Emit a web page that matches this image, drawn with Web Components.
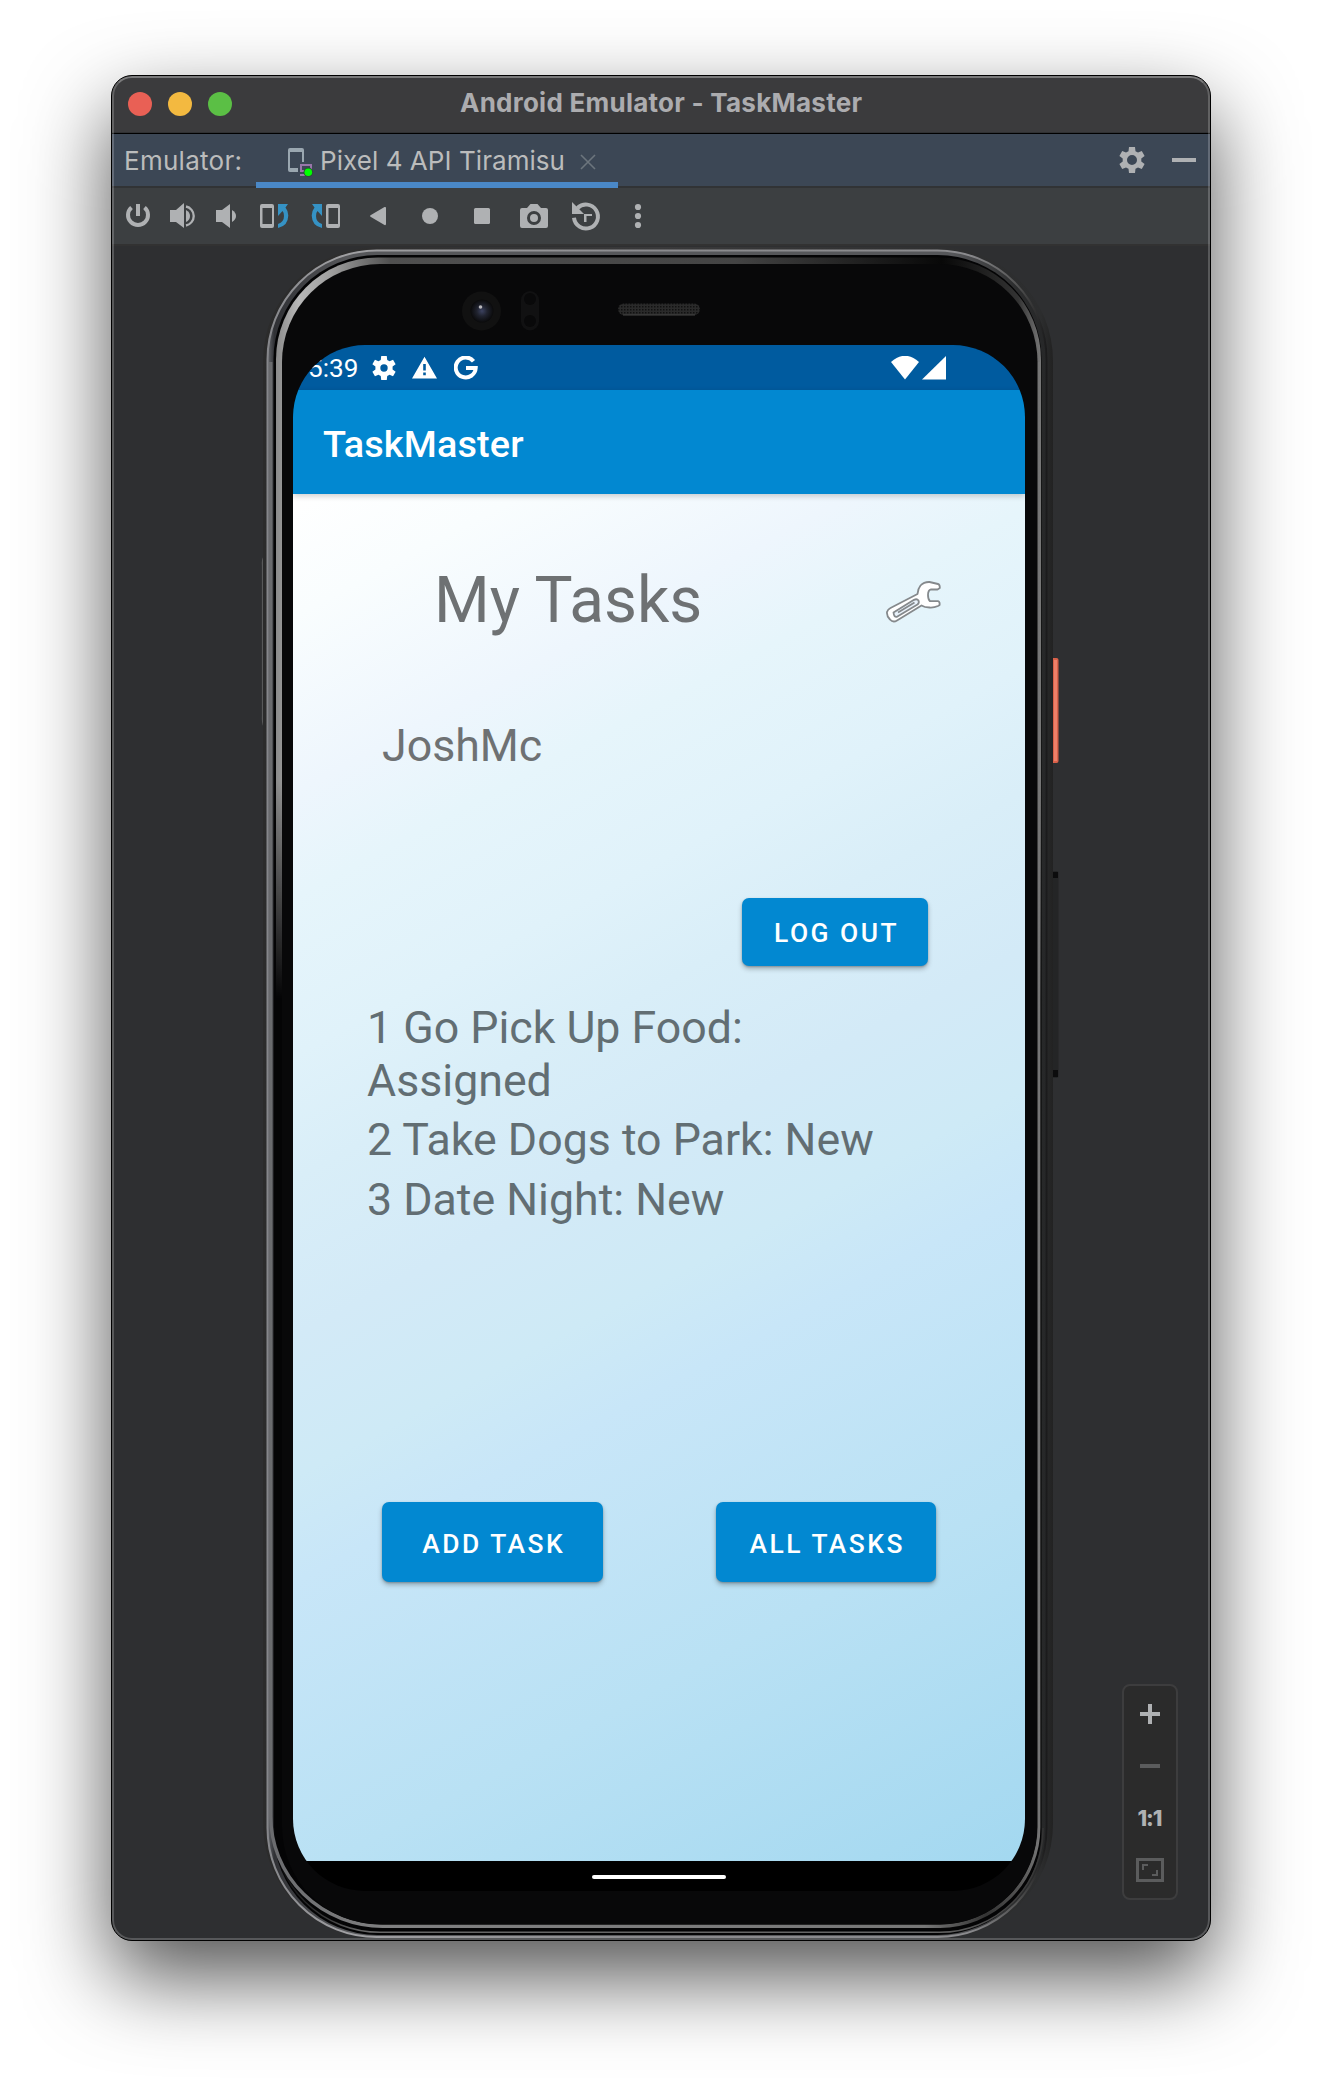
<!DOCTYPE html>
<html lang="en">
<head>
<meta charset="utf-8">
<title>Android Emulator - TaskMaster</title>
<style>
  html, body { margin: 0; background: #fff; }
  body { width: 1322px; height: 2088px; overflow: hidden; padding: 75px 111px 0; box-sizing: border-box; }
</style>
</head>
<body>
<emulator-window heading="Android Emulator - TaskMaster">
  <tab-strip slot="tabs"></tab-strip>
  <device-toolbar slot="toolbar"></device-toolbar>
  <phone-device slot="stage">
    <status-bar></status-bar>
    <app-bar>TaskMaster</app-bar>
    <task-home></task-home>
  </phone-device>
  <zoom-panel slot="controls"></zoom-panel>
</emulator-window>

<script>
function define(name, html, setup) {
  const t = document.createElement('template');
  t.innerHTML = html;
  customElements.define(name, class extends HTMLElement {
    constructor() {
      super();
      this.attachShadow({ mode: 'open' }).appendChild(t.content.cloneNode(true));
    }
    connectedCallback() { if (setup) setup(this, this.shadowRoot); }
  });
}

// Single-line label whose tracking is adjusted so that it occupies a given width.
define('fit-label', `
<style>
  :host { display: inline-block; white-space: nowrap; }
  span { display: inline-block; }
</style><span><slot></slot></span>`, (el, root) => {
  const span = root.querySelector('span');
  const n = el.textContent.length;
  const want = parseFloat(el.getAttribute('w'));
  const natural = span.getBoundingClientRect().width;
  const ls = (want - natural) / (n - 1);
  span.style.letterSpacing = ls.toFixed(3) + 'px';
  span.style.marginRight = (-ls).toFixed(3) + 'px';
});

define('tab-strip', `
<style>
  :host { display: flex; height: 54px; box-sizing: border-box; background: #3c4755; border-bottom: 2px solid #313335;
    font: 400 26px/54px Inter, sans-serif; color: #bbbcbc; padding: 0 14px 0 12px; }
  .label { width: 132px; }
  .tab { width: 362px; height: 54px; box-sizing: border-box; border-bottom: 6px solid #4a88c7; display: flex; padding-left: 32px; }
  .tab svg { margin-top: 14px; }
  .tab fit-label { margin-left: 6px; }
  .tab .x { margin: 20px 0 0 15px; }
  .right { margin-left: auto; display: flex; gap: 27px; align-items: center; height: 52px; }
  svg { display: block; flex: none; }
</style>
<div class="label"><fit-label w="118">Emulator:</fit-label></div>
<div class="tab">
  <svg width="26" height="30" viewBox="0 0 26 30"><path fill="#9aa7b0" d="M2 0H14Q16 0 16 2V14H14V4H2V20H10V24H2Q0 24 0 22V2Q0 0 2 0Z"/><path fill="#9876aa" d="M12 16H24V22H22V18H14V22H18V24H12ZM12 26H20V28H12Z"/><circle cx="20.300" cy="24.300" r="4.800" fill="#2e4a3a"/><circle cx="20.300" cy="24.300" r="3.800" fill="#0f0"/></svg>
  <fit-label w="245">Pixel 4 API Tiramisu</fit-label>
  <svg class="x" width="16" height="16" viewBox="0 0 16 16"><path d="M1 1L15 15M15 1L1 15" stroke="#6c757d" stroke-width="1.600"/></svg>
</div>
<div class="right">
  <svg width="26" height="26" viewBox="0 0 26 26"><path fill="#afb1b3" fill-rule="evenodd" d="M10 0H16L16.500 4.200L19 5.600L22.800 4L25.600 9L22.300 11.500V14.500L25.600 17L22.800 22L19 20.400L16.500 21.800L16 26H10L9.500 21.800L7 20.400L3.200 22L.4 17L3.700 14.500V11.500L.4 9L3.200 4L7 5.600L9.500 4.200ZM13 8A5 5 0 1 0 13 18A5 5 0 1 0 13 8Z"/></svg>
  <svg width="24" height="4"><path fill="#afb1b3" d="M0 0H24V4H0Z"/></svg>
</div>`);

define('device-toolbar', `
<style>
  :host { display: flex; height: 58px; box-sizing: border-box; background: #3c3f41; border-bottom: 2px solid #323232; padding: 0; }
  svg { display: block; }
</style>
<svg width="560" height="56" viewBox="112 188 560 56" fill="#afb1b3">
  <path d="M131.500 207.500A10 10 0 1 0 144.500 207.500" fill="none" stroke="#afb1b3" stroke-width="4"/><path d="M136 204H140V216H136Z"/>
  <path d="M170 210H176L184 203V228L176 222H170Z"/><path d="M186 210Q190 212 190 216Q190 220 186 222Z"/><path d="M186 206.500A9.700 9.700 0 0 1 186 225.500" fill="none" stroke="#afb1b3" stroke-width="2.300"/>
  <path d="M216 210H222L230 204V228L222 222H216Z"/><path d="M232 210Q236 212.500 236 216Q236 219.500 232 222Z"/>
  <path fill-rule="evenodd" d="M262 204H272Q274 204 274 206V226Q274 228 272 228H262Q260 228 260 226V206Q260 204 262 204ZM262.500 208V224H272V208Z"/>
  <path d="M278 204H288L285.500 207.500Q288.300 211 288.300 215.500Q288 226 278 228V224Q284 222 284 216Q284 212.500 282.500 211L278 216Z" fill="#3592c4"/>
  <path fill-rule="evenodd" d="M328 204H338Q340 204 340 206V226Q340 228 338 228H328Q326 228 326 226V206Q326 204 328 204ZM328.500 208V224H338V208Z"/>
  <path d="M322 204H312L314.500 207.500Q311.700 211 311.700 215.500Q312 226 322 228V224Q316 222 316 216Q316 212.500 317.500 211L322 216Z" fill="#3592c4"/>
  <path d="M370.500 215.200L384.500 207Q386 206.500 386 208V224Q386 225.500 384.500 225L370.500 216.800Q369.500 216 370.500 215.200Z"/>
  <circle cx="430" cy="216" r="8"/>
  <rect x="474" y="208" width="16" height="16" rx="1.500"/>
  <path fill-rule="evenodd" d="M522 208H527L530.500 204H537.500L541 208H546Q548 208 548 210V226Q548 228 546 228H522Q520 228 520 226V210Q520 208 522 208ZM534 211A7 7 0 1 0 534 225A7 7 0 1 0 534 211Z"/><circle cx="534" cy="218" r="4"/>
  <path d="M574 217.800A12 12 0 1 0 577.500 208" fill="none" stroke="#afb1b3" stroke-width="4"/><path d="M572 202L584 214H572Z"/><path d="M584 214H592V216H586.500V222H584Z"/>
  <circle cx="638" cy="207" r="3.100"/><circle cx="638" cy="216" r="3.100"/><circle cx="638" cy="225" r="3.100"/>
</svg>`);

define('phone-device', `
<style>
  :host { display: grid; width: 806px; height: 1693px; grid-template: 1693px / 806px; }
  svg, .screen { grid-area: 1 / 1; }
  svg { display: block; }
  .screen { margin: 99px 0 0 35px; width: 732px; height: 1546px; border-radius: 72px; background: #000; overflow: hidden; display: flex; flex-direction: column; font-family: Roboto, sans-serif; }
  .nav { flex: 1; display: flex; justify-content: center; padding-top: 14px; }
  .nav i { width: 134px; height: 4px; border-radius: 2px; background: #fff; }
</style>
<svg width="806" height="1693" viewBox="258 246 806 1693">
  <defs>
    <linearGradient id="shell"><stop offset="0" stop-color="#2b2b2b"/><stop offset=".5" stop-color="#39393a"/><stop offset=".985" stop-color="#2c2d2e"/><stop offset="1" stop-color="#222"/></linearGradient>
    <linearGradient id="rim" gradientUnits="userSpaceOnUse" x1="266" y1="0" x2="1047" y2="0"><stop offset="0" stop-color="#85868a"/><stop offset=".1" stop-color="#a0a0a3"/><stop offset=".5" stop-color="#8a8a8d"/><stop offset=".9" stop-color="#8b8b8e"/><stop offset=".96" stop-color="#555"/><stop offset="1" stop-color="#1a1a1b"/></linearGradient>
    <linearGradient id="band" gradientUnits="userSpaceOnUse" x1="268" y1="0" x2="1047" y2="0"><stop offset="0" stop-color="#626469"/><stop offset=".008" stop-color="#303135"/><stop offset=".1" stop-color="#56575a"/><stop offset=".88" stop-color="#56575a"/><stop offset=".96" stop-color="#2c2d2e"/><stop offset="1" stop-color="#262728"/></linearGradient>
    <linearGradient id="bevelTop" gradientUnits="userSpaceOnUse" x1="276" y1="0" x2="1041" y2="0"><stop offset="0" stop-color="#8a8a8a"/><stop offset=".03" stop-color="#b8b8b8"/><stop offset=".07" stop-color="#a0a0a0"/><stop offset=".15" stop-color="#505050"/><stop offset=".6" stop-color="#444"/><stop offset=".87" stop-color="#080808"/><stop offset=".97" stop-color="#333"/><stop offset="1" stop-color="#777"/></linearGradient>
    <linearGradient id="down" gradientUnits="userSpaceOnUse" x1="0" y1="780" x2="0" y2="1000"><stop offset="0" stop-color="#fff"/><stop offset="1" stop-color="#000"/></linearGradient>
    <mask id="upper" maskUnits="userSpaceOnUse" x="258" y="246" width="806" height="1693"><rect x="258" y="246" width="806" height="1693" fill="url(#down)"/></mask>
    <linearGradient id="lip" gradientUnits="userSpaceOnUse" x1="270" y1="0" x2="1040" y2="0"><stop offset="0" stop-color="#6a6b6e"/><stop offset=".15" stop-color="#808081"/><stop offset=".85" stop-color="#777"/><stop offset=".93" stop-color="#333"/><stop offset=".975" stop-color="#555"/><stop offset="1" stop-color="#777"/></linearGradient>
    <linearGradient id="seam" gradientUnits="userSpaceOnUse" x1="270" y1="0" x2="1045" y2="0"><stop offset="0" stop-color="#555" stop-opacity="0"/><stop offset=".12" stop-color="#666"/><stop offset=".85" stop-color="#666"/><stop offset="1" stop-color="#333"/></linearGradient>
    <radialGradient id="lens"><stop offset="0" stop-color="#3c4260"/><stop offset=".45" stop-color="#20232f"/><stop offset="1" stop-color="#0a0a0b"/></radialGradient>
    <pattern id="mesh" width="3" height="3" patternUnits="userSpaceOnUse"><path d="M0 0H3V3H0Z" fill="#2a2a2a"/><path d="M0 0H1.500V1.500H0Z" fill="#111"/></pattern>
  </defs>
  <path d="M264 557Q262 559 262.500 566V715Q262 724 264 726" fill="none" stroke="#58595a" stroke-width="1.200"/>
  <rect x="1051" y="658" width="7.500" height="105" rx="2" fill="#d9614a"/><rect x="1054" y="660" width="3" height="101" fill="#ee8068"/>
  <rect x="1052" y="871" width="6.500" height="207" rx="2" fill="#242526"/><path d="M1053 872H1058V878H1053ZM1053 1070H1058V1077H1053Z" fill="#0c0c0d"/>
  <rect x="263" y="247" width="790" height="1691" rx="114" fill="url(#shell)"/>
  <rect x="267.500" y="250.500" width="779" height="1686.500" rx="109" fill="url(#band)" stroke="url(#rim)" stroke-width="2"/>
  <rect x="273.500" y="255" width="768" height="1680" rx="104" fill="#040405"/>
  <path d="M274 1828A106 104 0 0 0 380 1932.300H940A103 103 0 0 0 1043 1828" fill="none" stroke="url(#seam)" stroke-width="1.500"/>
  <rect x="276" y="257.500" width="765" height="1671" rx="102" fill="url(#bevelTop)" mask="url(#upper)"/>
  <path d="M270.700 362V1816A112 110 0 0 0 383 1926.200H940A99 99 0 0 0 1038.700 1827V362" fill="none" stroke="url(#lip)" stroke-width="3.400"/>
  <rect x="282" y="264" width="755.500" height="1660.500" rx="98" fill="#080809"/>
  <circle cx="481.500" cy="311" r="19.500" fill="#111"/><circle cx="482" cy="311" r="11.500" fill="url(#lens)"/><circle cx="480.500" cy="307" r="1.800" fill="#b8b8bc"/>
  <rect x="521" y="291" width="18" height="39.500" rx="9" fill="#111112"/><circle cx="530" cy="299" r="6" fill="#09090a"/><circle cx="530" cy="321" r="6" fill="#09090a"/>
  <rect x="618" y="303.500" width="82" height="11.500" rx="5.700" fill="url(#mesh)"/><path d="M623 315H695" stroke="#444" stroke-width="1"/>
</svg>
<div class="screen"><slot></slot><div class="nav"><i></i></div></div>`);

define('status-bar', `
<style>
  :host { display: flex; height: 45px; box-sizing: border-box; background: #005b9f; color: #fff; padding: 2px 79px 0 15px; font-size: 26.1px; line-height: 42px; }
  svg { display: block; margin-top: 9px; flex: none; }
  .time { width: 63.500px; }
  .sys { margin-left: auto; display: flex; gap: 3px; }
</style>
<div class="time">5:39</div>
<svg width="24" height="24" viewBox="0 0 26 26" fill="#fff"><path fill-rule="evenodd" d="M10 0H16L16.500 4.200L19 5.600L22.800 4L25.600 9L22.300 11.500V14.500L25.600 17L22.800 22L19 20.400L16.500 21.800L16 26H10L9.500 21.800L7 20.400L3.200 22L.4 17L3.700 14.500V11.500L.4 9L3.200 4L7 5.600L9.500 4.200ZM13 9A4 4 0 1 0 13 17A4 4 0 1 0 13 9Z"/></svg>
<svg width="25" height="24" viewBox="0 0 25 24" style="margin-left:16px"><path fill="#fff" fill-rule="evenodd" d="M12.500 .7L25 22.500H0ZM11.200 8V14.500H13.800V8ZM11.200 16.500V19.200H13.800V16.500Z"/></svg>
<svg width="24" height="24" viewBox="0 0 24 24" style="margin-left:17px"><path d="M19.500 5.200A10 10 0 1 0 21.700 12H12" fill="none" stroke="#fff" stroke-width="4"/></svg>
<div class="sys">
  <svg width="28" height="24" viewBox="0 0 28 24"><path fill="#fff" d="M0 6Q14 -6.500 28 6L14 23.500Z"/></svg>
  <svg width="24" height="24" viewBox="0 0 24 24"><path fill="#fff" d="M24 0V23.500H0Z"/></svg>
</div>`);

define('app-bar', `
<style>
  :host { display: block; height: 104px; flex: none; background: #0288d1; color: #fff; box-sizing: border-box; padding: 2px 0 0 30px;
    font-size: 37.8px; font-weight: 500; letter-spacing: .15px; line-height: 104px; position: relative; box-shadow: 0 2px 6px rgba(0,0,0,.2); }
</style><span><slot></slot></span>`);

define('material-button', `
<style>
  :host { display: flex; align-items: center; justify-content: center; box-sizing: border-box; background: #0288d1; color: #fff;
    border-radius: 7px; font-weight: 500; font-size: 26.4px; letter-spacing: 2.480px; line-height: 1; box-shadow: 0 3px 5px rgba(0,0,0,.26), 0 1px 2px rgba(0,0,0,.2); }
  span { padding: 3px 0 0 3px; }
</style><span><slot></slot></span>`);

define('task-home', `
<style>
  :host { display: flex; flex-direction: column; height: 1367px; flex: none; box-sizing: border-box; padding: 69px 75px 0 74px; color: #6e7173; font-size: 44.7px; line-height: 52.400px;
    background: linear-gradient(152deg, #fff 0%, #f9fdfe 7%, #eef6fd 17%, #e6f5fb 23%, #e0f2fa 32%, #d9eef8 39%, #d3eaf7 48%, #ceeaf6 56%, #c8e6f8 62%, #b9e1f4 79%, #a3d8f0 100%); }
  .head { display: flex; height: 74px; padding-left: 67px; font-size: 63.900px; line-height: 75px; }
  .head svg { margin: 17px 9px 0 auto; display: block; }
  .user { margin: 83px 0 0 15px; height: 52.400px; }
  .logout { width: 186px; height: 68px; margin: 125.400px 22px 0 auto; }
  .list { margin-top: 36.600px; display: flex; flex-direction: column; gap: 7.200px; width: 520px; color: #626e73; }
  .foot { margin: 276px 14px 0 15px; display: flex; justify-content: space-between; }
  .foot material-button { width: 220.500px; height: 80px; }
</style>
<div class="head"><span>My Tasks</span>
  <svg width="56" height="44" viewBox="885 580 56 44" fill="#fff" stroke="#85898c" stroke-width="1.800" stroke-linejoin="round"><path d="M887 612Q887.500 609.500 890.500 608L917.500 594Q918 588.500 920.500 585.500Q924 581.800 929.500 582L938 584Q940 584.500 939.800 588L937.500 589.500L931 589.300Q928 590 928 595Q928 599.500 930 601.200L938 601.200Q940 601.600 939.600 605L938 606Q934 607.800 929.500 607.500Q924.500 607.500 921.500 605.500L897 620.500Q893 623 890 619.500Q886.500 616 887 612Z"/><path fill="#e9f2fb" d="M893.500 612.500L914 599.800Q917 598.500 918.500 600.500Q919.500 603 917.500 604.500L897 616.800Q894 617.500 893.500 612.500ZM898 612.500L914.500 602.500"/></svg>
</div>
<div class="user">JoshMc</div>
<material-button class="logout">LOG OUT</material-button>
<div class="list"><div>1 Go Pick Up Food: Assigned</div><div>2 Take Dogs to Park: New</div><div>3 Date Night: New</div></div>
<div class="foot"><material-button>ADD TASK</material-button><material-button>ALL TASKS</material-button></div>`);

define('zoom-panel', `
<style>
  :host { display: flex; flex-direction: column; align-items: center; box-sizing: border-box; width: 56px; height: 216px;
    background: #2b2b2b; border: 2px solid #3d3d3e; border-radius: 8px; padding: 18px 0 0; }
  svg { display: block; flex: none; }
  b { font: 800 22px/26px Inter, sans-serif; color: #afb1b3; margin: 37px 0 27px; height: 26px; }
</style>
<svg width="20" height="20"><path fill="#afb1b3" d="M8 0H12V8H20V12H12V20H8V12H0V8H8Z"/></svg>
<svg width="20" height="4" style="margin-top:40px"><path fill="#5b5c5d" d="M0 0H20V4H0Z"/></svg>
<b><fit-label w="25">1:1</fit-label></b>
<svg width="28" height="24"><path fill="none" stroke="#5b5c5d" stroke-width="3" d="M1.500 1.500H26.500V22.500H1.500Z"/><path fill="none" stroke="#5b5c5d" stroke-width="2" d="M7 12V7H12M21 12V17H16"/></svg>`);

define('emulator-window', `
<style>
  :host { display: block; box-sizing: border-box; width: 1100px; height: 1866px; border: 1px solid #000; border-radius: 21px;
    box-shadow: 0 36px 84px rgba(0,0,0,.68); overflow: hidden; background: #2e2f31; }
  .frame { position: relative; display: flex; flex-direction: column; height: 1864px; }
  .frame::after { content: ""; position: absolute; inset: 0; border-radius: 20px; border: 2px solid rgba(255,255,255,.2); border-top-color: rgba(255,255,255,.32); pointer-events: none; }
  header { display: flex; align-items: center; height: 58px; box-sizing: border-box; border-bottom: 1px solid #000; box-shadow: inset 0 -1px #303133; background: #3b3b3d; padding: 0 16px 2px; }
  .lights { display: flex; gap: 16px; width: 160px; }
  .lights i { width: 24px; height: 24px; border-radius: 50%; }
  h1 { flex: 1; margin: 0; padding-bottom: 2px; text-align: center; font: 700 26px/52px Inter, sans-serif; color: #acacaf; }
  .pad { width: 160px; }
  .stage { display: grid; grid-template: 1fr / 1fr; flex: 1; }
  slot[name=stage]::slotted(*) { grid-area: 1 / 1; margin-left: 146px; }
  slot[name=controls]::slotted(*) { grid-area: 1 / 1; justify-self: end; align-self: end; margin: 0 32px 40px 0; }
</style>
<div class="frame">
  <header>
    <div class="lights"><i style="background:#e96055"></i><i style="background:#f3b940"></i><i style="background:#5bbf45"></i></div>
    <h1><fit-label w="402">Android Emulator - TaskMaster</fit-label></h1><div class="pad"></div>
  </header>
  <slot name="tabs"></slot>
  <slot name="toolbar"></slot>
  <div class="stage"><slot name="stage"></slot><slot name="controls"></slot></div>
</div>`);
</script>
</body>
</html>
